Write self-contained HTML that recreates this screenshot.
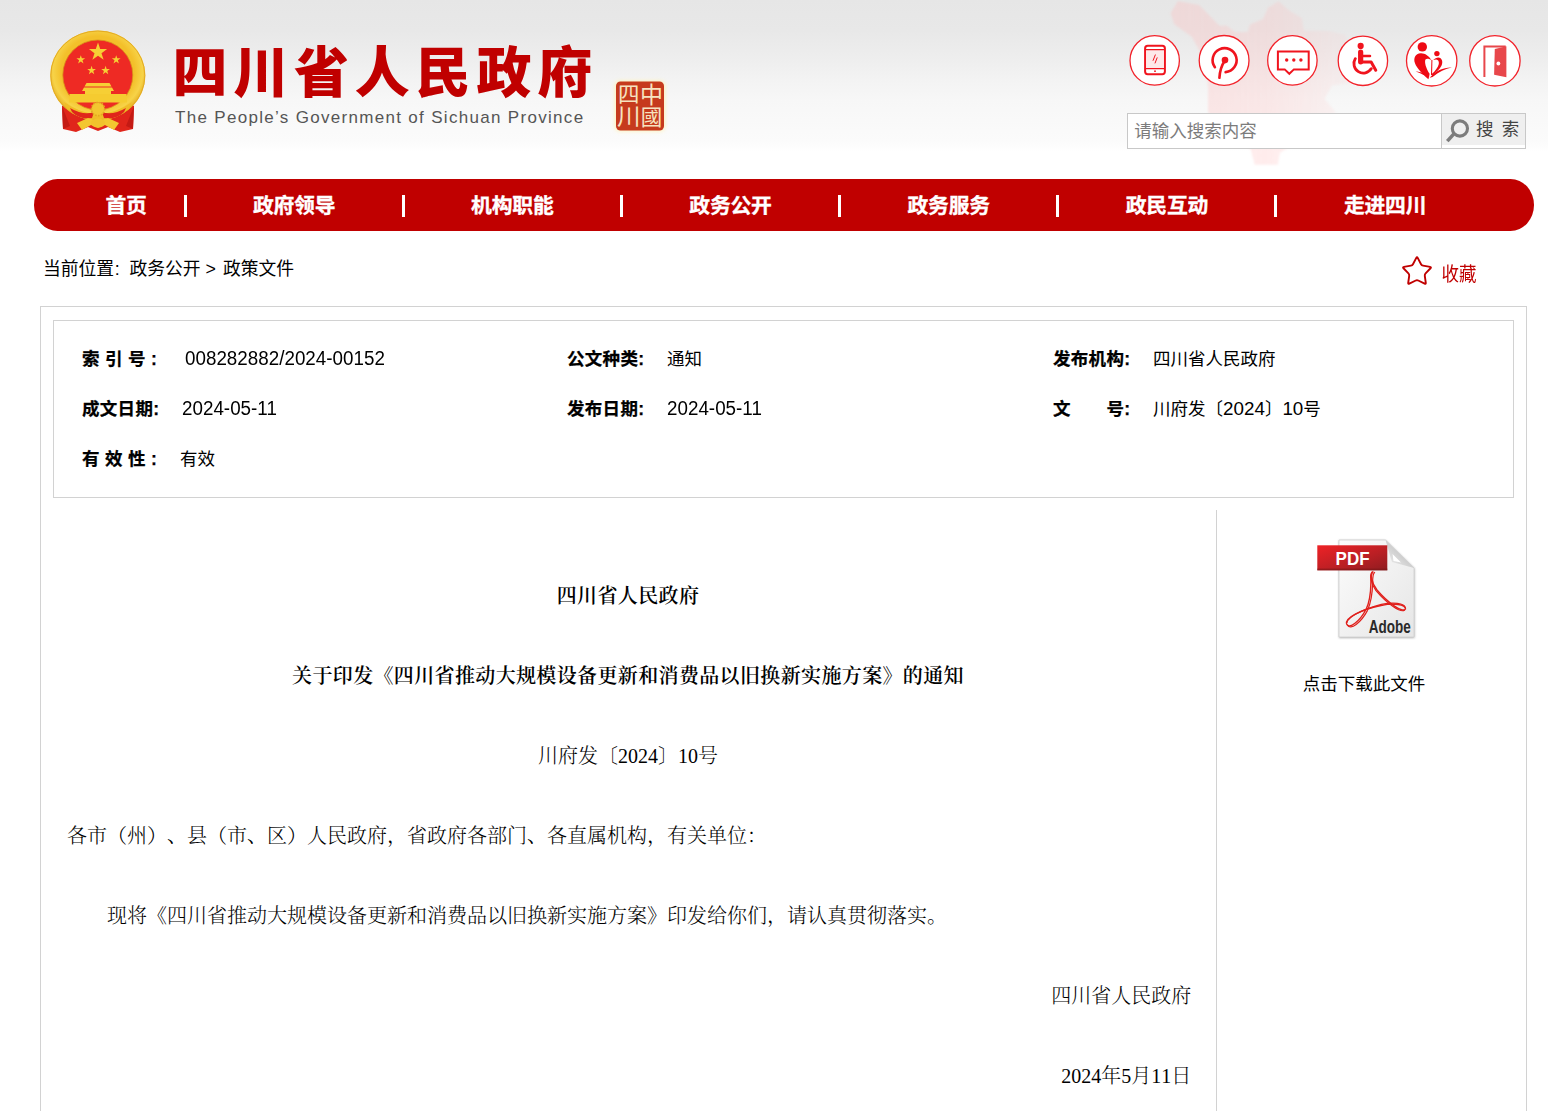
<!DOCTYPE html>
<html lang="zh-CN">
<head>
<meta charset="utf-8">
<title>四川省人民政府关于印发《四川省推动大规模设备更新和消费品以旧换新实施方案》的通知</title>
<style>
*{box-sizing:border-box;margin:0;padding:0}
html,body{width:1548px;height:1111px;overflow:hidden;background:#fff}
body{position:relative;font-family:"Liberation Sans","Noto Sans CJK SC",sans-serif;color:#000}
.abs{position:absolute}
#hdbg{left:0;top:0;width:1548px;height:179px;background:linear-gradient(to bottom,#e6e6e6 0px,#e8e8e8 30px,#eeeeee 60px,#f3f3f3 80px,#f7f7f7 100px,#f9f9f9 120px,#fbfbfb 142px,#ffffff 152px)}
#title{left:172.4px;top:37.7px;font-family:"Liberation Sans","Noto Sans CJK SC",sans-serif;font-weight:900;font-size:55px;line-height:70px;color:#c00000;letter-spacing:5.8px;white-space:nowrap}
#sub{left:175px;top:105.7px;font-size:17px;line-height:24px;color:#555;letter-spacing:1.31px;white-space:nowrap}
#nav{left:34px;top:179px;width:1500px;height:52px;border-radius:23.5px/26px;background:#c00000}
.ni{position:absolute;top:1px;height:52px;line-height:52px;text-align:center;color:#fff;-webkit-text-stroke:.35px #fff;font-weight:700;font-size:20.8px;letter-spacing:-0.2px;white-space:nowrap}
.sep{position:absolute;top:16px;width:3.2px;height:21.5px;background:#fff}
#crumb{left:43px;top:256px;font-size:17.8px;line-height:26px;white-space:nowrap}
#fav{left:1441.5px;top:260.6px;font-size:17.5px;line-height:26px;color:#c00000;white-space:nowrap;transform:scaleY(1.12);transform-origin:0 50%}
#outer{left:40px;top:306px;width:1487px;height:830px;border:1px solid #d2d2d2}
#inner{left:53px;top:320px;width:1461px;height:178px;border:1px solid #d2d2d2}
.lb{position:absolute;-webkit-text-stroke:.25px #000;font-weight:700;font-size:17.5px;line-height:26px;white-space:nowrap;letter-spacing:.3px}
.vl{position:absolute;font-size:17.5px;line-height:26px;white-space:nowrap}
.num{font-size:18.8px;letter-spacing:.02px}
div.num{transform:scaleY(1.06);transform-origin:0 8px}
#vline{left:1216px;top:510px;width:1px;height:620px;background:#d2d2d2}
.doc{position:absolute;text-spacing-trim:space-all;font-kerning:none;font-weight:300;font-family:"Liberation Serif","Noto Serif CJK SC",serif;font-size:20px;line-height:30px;white-space:nowrap;color:#000}
.b{font-weight:600;letter-spacing:.36px}
#dl{left:1264px;top:671px;width:200px;text-align:center;font-size:17.5px;line-height:26px;white-space:nowrap}
#sbox{left:1127px;top:113px;width:399px;height:36px;border:1px solid #c8c8c8;background:#fff}
#sbtn{left:1441px;top:114px;width:84px;height:34px;border-left:1px solid #c8c8c8;background:linear-gradient(to bottom,#efefef 0,#efefef 31px,#fff 31px)}
#ph{left:1134.2px;top:118px;font-size:17.5px;line-height:26px;color:#7c7c7c;white-space:nowrap}
#stx{left:1476px;top:116px;font-size:17.5px;line-height:26px;color:#444;white-space:nowrap;word-spacing:3.5px}
</style>
</head>
<body>
<div id="hdbg" class="abs"></div>


<!-- faint sichuan map -->
<svg class="abs" style="left:1160px;top:0" width="260" height="170" viewBox="1160 0 260 170">
  <defs><filter id="mb"><feGaussianBlur stdDeviation="0.8"/></filter><linearGradient id="mg" x1="0" y1="0" x2="1" y2="0"><stop offset="0" stop-color="#ffbcbc" stop-opacity=".33"/><stop offset="0.55" stop-color="#ffbcbc" stop-opacity=".27"/><stop offset="1" stop-color="#ffc4c4" stop-opacity=".12"/></linearGradient></defs>
  <path filter="url(#mb)" d="M1178 1L1170.6 12.9L1174.2 24.2L1191.7 36.8L1199.4 50.4L1205.2 67.8L1208.1 87.2L1208.1 112.4L1227.5 131.8L1250.8 149.2L1254.7 164.7L1277.9 164.7L1279.8 153.1L1285.7 149.2L1312 130L1336 112.4L1324.4 98.8L1332.2 85.3L1351.6 83.3L1353.5 64L1345.7 34.9L1328.3 31L1304 30.8L1301.7 18L1288.8 10.3L1278.5 1.3L1268 7.7L1263 19L1250 24.4L1247.7 32L1234.8 32L1227 25.7L1219.4 25.7L1209 15L1199 5Z" fill="url(#mg)"/>
</svg>

<!-- national emblem -->
<svg class="abs" style="left:48px;top:28px" width="100" height="106" viewBox="0 0 100 106">
  <defs>
    <radialGradient id="gold" cx="50%" cy="45%" r="55%">
      <stop offset="0.70" stop-color="#f3c02a"/><stop offset="0.86" stop-color="#f7d348"/><stop offset="1" stop-color="#e2a81c"/>
    </radialGradient>
  </defs>
  <!-- ribbon -->
  <path d="M14 78 L20 74 L50 86 L80 74 L86 78 L85 101 L72 104 L60 99 L50 103 L40 99 L28 104 L15 101 Z" fill="#e0251b"/>
  <path d="M14 78 L22 98 L15 101 Z M86 78 L78 98 L85 101 Z" fill="#c41a14"/>
  <!-- ring -->
  <ellipse cx="49.8" cy="47.5" rx="47.5" ry="45" fill="url(#gold)"/>
  <ellipse cx="49.8" cy="47.5" rx="47" ry="44.5" fill="none" stroke="#e4ab22" stroke-width="1"/>
  <circle cx="49.8" cy="47" r="35" fill="#ee2a24"/>
  <circle cx="49.8" cy="47" r="35" fill="none" stroke="#d8901a" stroke-width="0.8"/>
  <!-- stars -->
  <g fill="#f6cf35">
    <polygon points="50,14.5 52.2,21.1 59.1,21.1 53.5,25.2 55.6,31.8 50,27.7 44.4,31.8 46.5,25.2 40.9,21.1 47.8,21.1"/>
    <polygon transform="translate(32.8,31.7) scale(0.48) translate(-50,-24)" points="50,14.5 52.2,21.1 59.1,21.1 53.5,25.2 55.6,31.8 50,27.7 44.4,31.8 46.5,25.2 40.9,21.1 47.8,21.1"/>
    <polygon transform="translate(68.2,31.7) scale(0.48) translate(-50,-24)" points="50,14.5 52.2,21.1 59.1,21.1 53.5,25.2 55.6,31.8 50,27.7 44.4,31.8 46.5,25.2 40.9,21.1 47.8,21.1"/>
    <polygon transform="translate(43.6,42.4) scale(0.48) translate(-50,-24)" points="50,14.5 52.2,21.1 59.1,21.1 53.5,25.2 55.6,31.8 50,27.7 44.4,31.8 46.5,25.2 40.9,21.1 47.8,21.1"/>
    <polygon transform="translate(57.6,42.4) scale(0.48) translate(-50,-24)" points="50,14.5 52.2,21.1 59.1,21.1 53.5,25.2 55.6,31.8 50,27.7 44.4,31.8 46.5,25.2 40.9,21.1 47.8,21.1"/>
  </g>
  <!-- tiananmen -->
  <path d="M38.5 55 L61.5 55 L63.5 58.5 L36.5 58.5 Z M36 59.5 L64 59.5 L66 63 L34 63 Z M37 63 L63 63 L63 66 L37 66 Z" fill="#f6cf35"/>
  <path d="M21.5 66 L78.5 66 L79 74.5 L21 74.5 Z" fill="#f5cb30"/>
  <!-- gear + wheat at bottom -->
  <path d="M16 74 Q50 98 84 74 L81 81 Q50 101 19 81 Z" fill="#f0bd28"/>
  <path d="M22 80 Q36 88 46 84 L44 90 Q32 92 24 84 Z M78 80 Q64 88 54 84 L56 90 Q68 92 76 84 Z" fill="#e0251b"/>
  <circle cx="50" cy="81" r="6.6" fill="#f3c730"/>
  <circle cx="50" cy="81" r="6.6" fill="none" stroke="#e2a820" stroke-width="1.6" stroke-dasharray="1.6 1.3"/>
  <path d="M29 95 L40 90 L50 93 L60 90 L71 95 L66 102 L57 97 L50 100 L43 97 L34 102 Z" fill="#f3c730"/>
  <ellipse cx="50" cy="95" rx="7" ry="4.6" fill="#f1c22c"/>
</svg>

<!-- seal -->
<svg class="abs" style="left:606px;top:72px" width="68" height="68" viewBox="0 0 68 68">
  <defs><filter id="glow" x="-30%" y="-30%" width="160%" height="160%"><feGaussianBlur stdDeviation="2.2"/></filter></defs>
  <rect x="9" y="9" width="50" height="50" rx="5" fill="#fff2b0" filter="url(#glow)" opacity="0.9"/>
  <rect x="10" y="9.5" width="48" height="49" rx="4.5" fill="#c63a1d"/>
  <g font-family="'Liberation Sans','Noto Sans CJK SC',sans-serif" font-weight="400" fill="#f6e3c0" text-anchor="middle">
    <text x="45.5" y="31.4" font-size="23">中</text>
    <text x="45.5" y="52.6" font-size="21.5">國</text>
    <text x="22.8" y="29.6" font-size="21.5">四</text>
    <text x="22.8" y="53.4" font-size="23.5">川</text>
  </g>
</svg>
<!-- header logo -->
<div id="title" class="abs">四川省人民政府</div>
<div id="sub" class="abs">The People’s Government of Sichuan Province</div>

<!-- search -->
<div id="sbox" class="abs"></div>
<div id="sbtn" class="abs"></div>
<div id="ph" class="abs">请输入搜索内容</div>
<div id="stx" class="abs">搜 索</div>


<svg class="abs" style="left:1442px;top:114px" width="32" height="32" viewBox="1442 114 32 32">
  <circle cx="1459.9" cy="128.5" r="7.6" fill="none" stroke="#7c7c7c" stroke-width="3.1"/>
  <path d="M1453.9 133.9L1447.3 141.1" stroke="#7c7c7c" stroke-width="3.6" stroke-linecap="butt"/>
</svg>

<!-- top-right round icons -->
<svg class="abs" style="left:1126px;top:32px" width="400" height="58" viewBox="1126 32 400 58" fill="none" stroke="#f0141e" stroke-linecap="round" stroke-linejoin="round">
  <g stroke-width="1.3" fill="#fff" stroke="#f2222a">
    <circle cx="1154.7" cy="60.4" r="24.7"/><circle cx="1224.1" cy="60.4" r="24.9"/><circle cx="1292.4" cy="60.4" r="24.7"/>
    <circle cx="1362.9" cy="60.8" r="24.7"/><circle cx="1431.7" cy="60.8" r="25.2"/><circle cx="1494.9" cy="60.8" r="25.2"/>
  </g>
  <!-- phone -->
  <g transform="translate(1129.7,35.4)">
    <rect x="15.4" y="10.4" width="19.8" height="28.4" rx="2.6" stroke-width="2"/>
    <rect x="17" y="14.4" width="16.6" height="18.4" fill="#fde9e9" stroke="none"/>
    <path d="M16 14.2H34.6M16 33.2H34.6" stroke-width="1.1"/>
    <path d="M25.6 19.5L23.4 25M27.4 22.4L25.4 27.6" stroke-width="1"/>
    <circle cx="25.3" cy="35.8" r="0.9" fill="#f0141e" stroke="none"/>
  </g>
  <!-- broadcast P -->
  <g transform="translate(1198.6,35.6)">
    <path d="M16.3 31.6A12 12 0 1 1 27 36.5" stroke-width="2.6"/>
    <circle cx="26.4" cy="24.5" r="3.3" fill="#f0141e" stroke="none"/>
    <path d="M26 25.5C22.6 30.5 21.2 36.5 20.8 42.2" stroke-width="2.6"/>
  </g>
  <!-- chat -->
  <g transform="translate(1267.3,35.6)">
    <path d="M10.6 15.8H41.4V33.8H26.6L22 38.2L17.4 33.8H10.6Z" stroke-width="2" stroke-linejoin="miter"/>
    <g fill="#f0141e" stroke="none"><circle cx="19.4" cy="24.4" r="1.7"/><circle cx="26.5" cy="24.4" r="1.7"/><circle cx="33.6" cy="24.4" r="1.7"/></g>
  </g>
  <!-- wheelchair -->
  <g transform="translate(1337.75,36)">
    <circle cx="22.9" cy="9.9" r="3.1" fill="#f0141e" stroke="none"/>
    <path d="M22.9 16.2V25.8" stroke-width="5.2"/>
    <path d="M23 20H32.2" stroke-width="2.6"/>
    <path d="M23 26H33.4L38 34.2" stroke-width="3"/>
    <path d="M17.6 22.6A9.2 9.2 0 1 0 33.6 32.6" stroke-width="2.8"/>
  </g>
  <!-- caring heart -->
  <g transform="translate(1406.2,35.3)" fill="#ee0a14" stroke="none">
    <circle cx="16.1" cy="11.6" r="4.7"/>
    <circle cx="30.7" cy="18.3" r="2.7"/>
    <path d="M14.5 17.9C9 18.3 7 23 8.8 28C10.6 33 16 38.5 22.2 44C22.8 42 23.2 40 23.4 38.4C20.6 34 18.6 29 18.9 25.6C19.1 23.2 21.2 22.4 25.2 24.8C22.8 20.6 18.6 17.7 14.5 17.9Z"/>
    <path d="M25.2 24.6L26.2 24.6L25.9 39.6L24.8 39.6Z"/>
    <path d="M27 24.8C29.4 22.2 32.6 21.6 34.4 23C37.6 26 36.1 31.2 31.6 35.2C29.6 37 27.8 38.6 26.2 40.2L25.6 38.8C29 35.6 32 31.6 32.6 28.6C33 26 32 24.3 30 24.1C29 24.1 27.9 24.4 27 24.8Z"/>
    <path d="M23.4 42.4C29.4 35.4 38 31.8 45.6 32.2C39.2 33.6 32.6 36.4 26.4 41.8Z"/>
    <path d="M9.4 36C12.8 36.4 16.2 37.2 18.8 39L17.4 39.8C15 38.4 12 37.2 9.4 36Z"/>
  </g>
  <!-- door -->
  <g transform="translate(1469.3,35.3)">
    <path d="M15.1 41.6V11.2H36.4" stroke="#e8474b" stroke-width="2" stroke-linecap="butt" stroke-linejoin="miter"/>
    <path d="M25.5 13.6L37.1 11V42L24.8 39.4Z" fill="#e8474b" stroke="none"/>
    <circle cx="29.1" cy="28.2" r="1.9" fill="#fff" stroke="none"/>
  </g>
</svg>
<!-- nav -->
<div id="nav" class="abs">
  <div class="ni" style="left:32.1px;width:120px">首页</div>
  <div class="ni" style="left:200.1px;width:120px">政府领导</div>
  <div class="ni" style="left:418.3px;width:120px">机构职能</div>
  <div class="ni" style="left:636.5px;width:120px">政务公开</div>
  <div class="ni" style="left:854.7px;width:120px">政务服务</div>
  <div class="ni" style="left:1072.9px;width:120px">政民互动</div>
  <div class="ni" style="left:1291.1px;width:120px">走进四川</div>
  <div class="sep" style="left:149.8px"></div>
  <div class="sep" style="left:367.8px"></div>
  <div class="sep" style="left:585.8px"></div>
  <div class="sep" style="left:803.8px"></div>
  <div class="sep" style="left:1021.8px"></div>
  <div class="sep" style="left:1239.8px"></div>
</div>

<div id="crumb" class="abs">当前位置<span style="margin:0 9.8px 0 .5px">:</span>政务公开<span style="margin:0 7px 0 5px">&gt;</span>政策文件</div>

<svg class="abs" style="left:1399px;top:252px" width="36" height="38" viewBox="0 0 36 38">
  <path d="M17.29 5.92Q18.00 4.60 18.71 5.92L22.04 12.19Q22.70 13.43 24.08 13.67L31.07 14.91Q32.55 15.17 31.51 16.25L26.58 21.36Q25.61 22.37 25.80 23.76L26.79 30.79Q26.99 32.28 25.64 31.62L19.26 28.51Q18.00 27.90 16.74 28.51L10.36 31.62Q9.01 32.28 9.21 30.79L10.20 23.76Q10.39 22.37 9.42 21.36L4.49 16.25Q3.45 15.17 4.93 14.91L11.92 13.67Q13.30 13.43 13.96 12.19Z" fill="none" stroke="#c00000" stroke-width="1.9" stroke-linejoin="round"/>
</svg>
<div id="fav" class="abs">收藏</div>

<div id="outer" class="abs"></div>
<div id="inner" class="abs"></div>

<!-- meta -->
<div class="lb" style="left:82px;top:346.3px">索 引 号 :</div><div class="vl num" style="left:185px;top:345.4px">008282882/2024-00152</div>
<div class="lb" style="left:567px;top:346.3px">公文种类:</div><div class="vl" style="left:667px;top:346.2px">通知</div>
<div class="lb" style="left:1053px;top:346.3px">发布机构:</div><div class="vl" style="left:1153px;top:346.2px">四川省人民政府</div>
<div class="lb" style="left:82px;top:396.3px">成文日期:</div><div class="vl num" style="left:182px;top:395.4px">2024-05-11</div>
<div class="lb" style="left:567px;top:396.3px">发布日期:</div><div class="vl num" style="left:667px;top:395.4px">2024-05-11</div>
<div class="lb" style="left:1053px;top:396.3px">文&#12288;&#12288;号:</div><div class="vl" style="left:1153px;top:396.2px">川府发〔<span class="num">2024</span>〕<span class="num">10</span>号</div>
<div class="lb" style="left:82px;top:446.3px">有 效 性 :</div><div class="vl" style="left:180px;top:446.2px">有效</div>

<div id="vline" class="abs"></div>

<!-- document body -->
<div class="doc b" style="left:53px;width:1150px;text-align:center;top:580.7px">四川省人民政府</div>
<div class="doc b" style="left:53px;width:1150px;text-align:center;top:660.7px">关于印发《四川省推动大规模设备更新和消费品以旧换新实施方案》的通知</div>
<div class="doc" style="left:53px;width:1150px;text-align:center;top:740.7px">川府发〔2024〕10号</div>
<div class="doc" style="left:67px;top:820.7px">各市（州）、县（市、区）人民政府，省政府各部门、各直属机构，有关单位：</div>
<div class="doc" style="left:107px;top:900.7px">现将《四川省推动大规模设备更新和消费品以旧换新实施方案》印发给你们，请认真贯彻落实。</div>
<div class="doc" style="left:53px;width:1138.2px;text-align:right;top:980.7px">四川省人民政府</div>
<div class="doc" style="left:53px;width:1138.2px;text-align:right;top:1060.7px">2024年5月11日</div>


<!-- pdf icon -->
<svg class="abs" style="left:1312px;top:534px" width="110" height="112" viewBox="1312 534 110 112">
  <defs>
    <linearGradient id="pg" x1="0" y1="0" x2="1" y2="1"><stop offset="0" stop-color="#fcfcfc"/><stop offset="1" stop-color="#e6e6e6"/></linearGradient>
    <linearGradient id="rg" x1="0" y1="0" x2="1" y2="1"><stop offset="0" stop-color="#ee2226"/><stop offset="0.6" stop-color="#b81f24"/><stop offset="1" stop-color="#8f1c20"/></linearGradient>
    <linearGradient id="fg" x1="0" y1="1" x2="1" y2="0"><stop offset="0" stop-color="#f4f4f4"/><stop offset="1" stop-color="#a8a8a8"/></linearGradient>
    <filter id="ps" x="-10%" y="-10%" width="120%" height="120%"><feGaussianBlur stdDeviation="1"/></filter>
  </defs>
  <path d="M1339 540.5H1385.5L1414.5 568.5V638H1339Z" fill="#9a9a9a" filter="url(#ps)" opacity=".8"/>
  <path d="M1339 540H1385.5L1414 568V637H1339Z" fill="url(#pg)" stroke="#cfcfcf" stroke-width="0.8"/>
  <path d="M1385.5 540L1414 568L1392 562C1390 556 1388 548 1385.5 540Z" fill="url(#fg)"/>
  <path d="M1392.5 554L1401 562.5L1393.5 561Z" fill="#fff"/>
  <rect x="1317.3" y="545.3" width="70" height="25" fill="url(#rg)"/>
  <rect x="1317.3" y="568.6" width="70" height="1.8" fill="#7a1518" opacity=".6"/>
  <text x="1352.6" y="564.8" font-family="'Liberation Sans',sans-serif" font-weight="700" font-size="19" fill="#fff" text-anchor="middle" textLength="34" lengthAdjust="spacingAndGlyphs">PDF</text>
  <g fill="none" stroke="#e0201c" stroke-width="1.4" stroke-linecap="round">
    <path d="M1373.4 571.5C1368 574 1374.5 592 1366 609.5C1360 621 1349 630 1346.6 624C1345 618 1360 610 1381 605.5C1393 603 1406 604 1405.5 609C1403 613.5 1388 603 1377 590C1371 582 1370 573 1373.4 571.5Z"/>
    <path d="M1374.6 572.5C1370.2 575 1376 592 1367.4 610.6C1361 622.6 1350.4 630.6 1347.6 625.2" stroke-width="1.2"/>
    <path d="M1347 622.5C1348 617 1362 609.4 1381.4 604.4C1393 601.8 1404.5 603 1405.2 607.6" stroke-width="1.2"/>
    <path d="M1404.6 610C1401 613.4 1387 603.6 1376 590.6C1370.4 583 1369.4 575 1372 572.2" stroke-width="1.2"/>
  </g>
  <text x="1368.8" y="632.6" font-family="'Liberation Sans',sans-serif" font-weight="700" font-size="17.5" fill="#2a2a2a" textLength="42" lengthAdjust="spacingAndGlyphs">Adobe</text>
</svg>
<div id="dl" class="abs">点击下载此文件</div>

</body>
</html>
